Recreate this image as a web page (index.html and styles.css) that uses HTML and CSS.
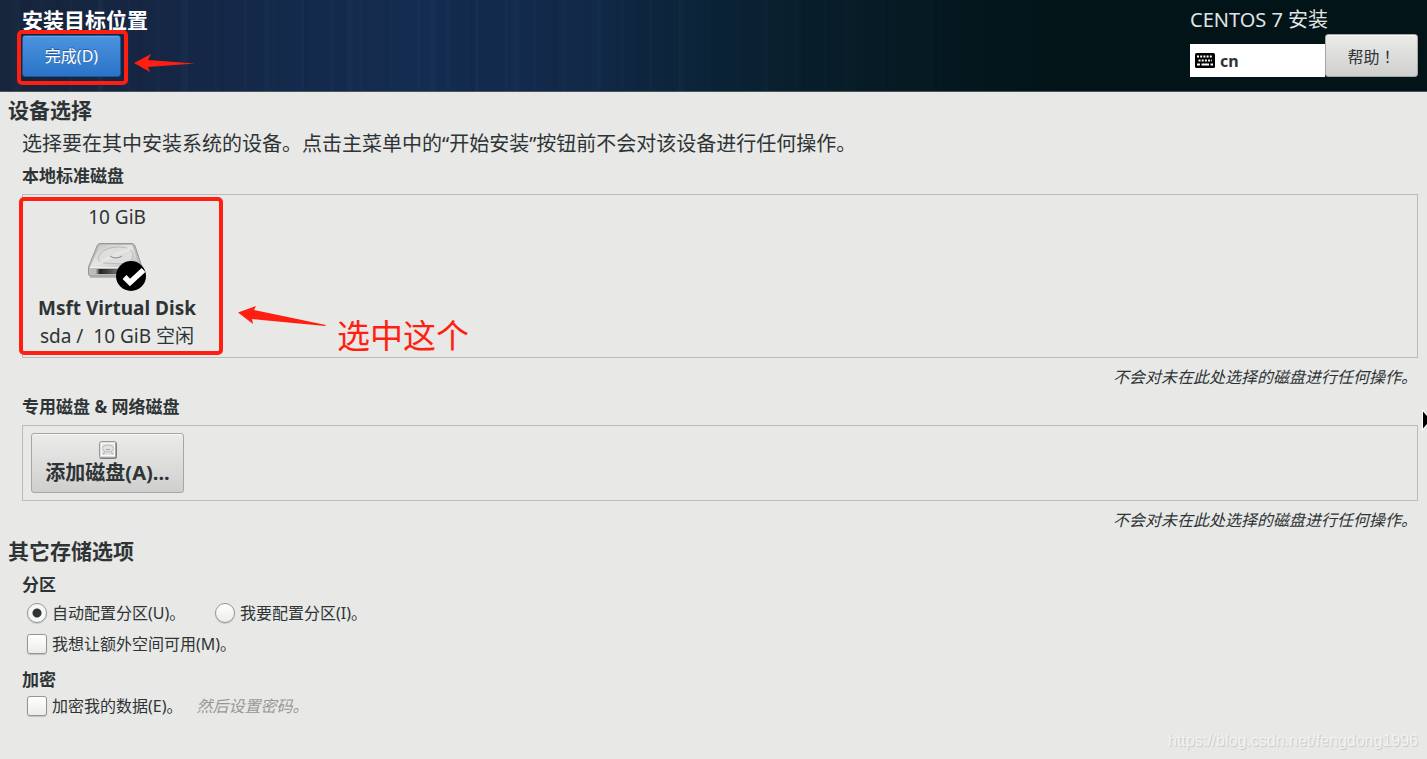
FILE: index.html
```html
<!DOCTYPE html>
<html lang="zh-CN">
<head>
<meta charset="utf-8">
<title>安装目标位置</title>
<link rel="stylesheet" href="styles.css">
</head>
<body>
<header class="topbar">
  <div class="topbar-left">
    <h1 class="title">安装目标位置</h1>
    <div class="done-wrap">
      <button class="btn btn-primary" type="button">完成(D)</button>
      <span class="mark mark-done"></span>
      <svg class="arrow arrow-done" width="62" height="20" viewBox="0 0 62 20" aria-hidden="true"><path d="M0 10 17 1 14 7 61 10.500 14 14 16 19Z" fill="#ff1f12"/></svg>
    </div>
  </div>
  <div class="topbar-right">
    <div class="product">CENTOS 7 安装</div>
    <div class="tools">
      <div class="keyboard">
        <svg width="20" height="15" viewBox="0 0 20 15" aria-hidden="true"><rect width="20" height="15" rx="1.500" fill="#000"/><path d="M2 3.500H18M3.500 7.500H17" stroke="#fff" stroke-width="2" stroke-dasharray="2 1.200"/><path d="M2 11.500H5M6.500 11.500H14M15.500 11.500H18" stroke="#fff" stroke-width="2"/></svg>
        <span>cn</span>
      </div>
      <button class="btn btn-help" type="button" lang="zh-TW">帮助！</button>
    </div>
  </div>
</header>
<main class="content">
  <h2 class="heading">设备选择</h2>
  <section class="section">
    <p class="intro">选择要在其中安装系统的设备。点击主菜单中的“开始安装”按钮前不会对该设备进行任何操作。</p>
    <h3 class="subheading">本地标准磁盘</h3>
    <div class="panel panel-disks">
      <div class="disk">
        <span>10 GiB</span>
        <svg class="disk-icon" width="60" height="52" viewBox="0 0 60 52" aria-hidden="true">
          <defs>
            <linearGradient id="top" x1="0" y1="0" x2="1" y2="1"><stop offset="0" stop-color="#c4c4c2"/><stop offset=".5" stop-color="#e6e6e4"/><stop offset="1" stop-color="#b8b8b6"/></linearGradient>
            <linearGradient id="front" x1="0" y1="0" x2="1" y2="0"><stop offset="0" stop-color="#b5b5b3"/><stop offset=".1" stop-color="#222"/><stop offset=".6" stop-color="#777"/><stop offset="1" stop-color="#aaa"/></linearGradient>
          </defs>
          <path d="M3 37H52V39H3Z" fill="#bcbcba"/>
          <path d="M13 4.500H45Q47 4.500 48 7L55 28V35Q55 37 53 37H4Q1.500 37 1.500 35V28L10 7Q11 4.500 13 4.500Z" fill="#bcbcba" stroke="#979795"/>
          <path d="M13 6H45L53 28H3Z" fill="url(#top)"/>
          <path d="M17 24Q8 22 13 15Q19 8 32 8Q46 8 46 16Q46 22 38 25Z" fill="#dededc" stroke="#bababa"/>
          <path d="M14 23Q28 15 43 10" fill="none" stroke="#e6e6e5" stroke-width="3"/>
          <path d="M23 17Q29 21 35 17" fill="none" stroke="#8a8a88"/>
          <path d="M3 28.500H53" stroke="#f1f1f0"/><rect x="9" y="30" width="39" height="5" fill="url(#front)"/>
          <circle cx="44" cy="37" r="15" fill="#000"/>
          <path d="M37.500 38 43 43.500 56.500 31" fill="none" stroke="#fff" stroke-width="5.500"/>
        </svg>
        <strong>Msft Virtual Disk</strong>
        <span>sda&nbsp;/&nbsp; 10 GiB 空闲</span>
      </div>
      <span class="mark mark-disk"></span>
      <svg class="arrow arrow-disk" width="90" height="22" viewBox="0 0 90 22" aria-hidden="true"><path d="M0 7.500 18 1 16 5 88 20 87 21 14 14 15 19Z" fill="#ff1f12"/></svg>
      <span class="callout">选中这个</span>
    </div>
    <p class="note">不会对未在此处选择的磁盘进行任何操作。</p>
    <h3 class="subheading">专用磁盘 &amp; 网络磁盘</h3>
    <div class="panel panel-add">
      <button class="btn btn-add" type="button">
        <svg width="18" height="18" viewBox="0 0 18 18" aria-hidden="true"><rect x=".5" y=".5" width="17" height="17" rx="2" fill="#ddd" stroke="#999"/><path d="M1 17H17V2" fill="none" stroke="#666"/><rect x="2.500" y="2.500" width="13" height="12" fill="#e2e2e1" stroke="#f8f8f8"/><ellipse cx="9" cy="7.500" rx="5.500" ry="3.500" fill="none" stroke="#bbb"/><path d="M7 8.500H11M4 13 6 11.500M14 13 12 11.500" stroke="#a5a5a5"/></svg>
        <span>添加磁盘(A)...</span>
      </button>
    </div>
    <p class="note">不会对未在此处选择的磁盘进行任何操作。</p>
  </section>
  <h2 class="heading">其它存储选项</h2>
  <section class="section">
    <h3 class="subheading">分区</h3>
    <div class="options">
      <div class="option-row">
        <label class="option option-auto"><input type="radio" name="partition" checked>自动配置分区(U)。</label>
        <label class="option"><input type="radio" name="partition">我要配置分区(I)。</label>
      </div>
      <label class="option"><input type="checkbox">我想让额外空间可用(M)。</label>
    </div>
    <h3 class="subheading">加密</h3>
    <div class="option-row option-encrypt">
      <label class="option"><input type="checkbox">加密我的数据(E)。</label>
      <em class="hint">然后设置密码。</em>
    </div>
  </section>
</main>
<svg class="cursor" width="5" height="22" viewBox="0 0 5 22" aria-hidden="true"><path d="M0 0 5 5V17L0 22Z" fill="#fff"/><path d="M1 2.500 5 7V15L1 19.500Z" fill="#000"/></svg>
<div class="watermark">https://blog.csdn.net/fengdong1996</div>
</body>
</html>
```
FILE: styles.css
```css
* { box-sizing: border-box; }
body {
  margin: 0;
  min-height: 100vh;
  position: relative;
  background: #e8e8e6;
  color: #2e3436;
  font: 16px/20px "Noto Sans", "Noto Sans CJK SC", sans-serif;
}
h1, h2, h3, p { margin: 0; }
button, input { font: inherit; }

.topbar {
  display: flex;
  justify-content: space-between;
  padding: 6px 9px 14px 22px;
  border-bottom: 1px solid #46545c;
  background:
    linear-gradient(90deg, transparent 40%, #021418 78%),
    repeating-linear-gradient(90deg, transparent 0 13px, rgba(70, 130, 180, .05) 17px 19px, transparent 22px 53px, rgba(0, 0, 20, .06) 57px, transparent 61px 83px),
    repeating-linear-gradient(90deg, transparent 0 11px, rgba(70, 130, 180, .05) 13px, transparent 15px 29px),
    linear-gradient(90deg, #17243a 0, #152747 14%, #142c50 28%, #12294a 40%, #0e2840 52%, #0a2230 66%, #021418 78%, #021418 100%);
}
.title { font-size: 21px; line-height: 28px; color: #fff; }
.product { font-size: 20px; line-height: 28px; color: #e0e4e4; }
.done-wrap { position: relative; width: 99px; margin-top: 1px; }
.btn {
  border: 1px solid #a5a7a4;
  border-radius: 3px;
  background: linear-gradient(#ebebea, #cfcfcd);
  color: #2e3436;
  box-shadow: inset 0 1px #f7f7f6;
}
.btn-primary {
  display: block;
  width: 100%;
  height: 42px;
  padding: 0;
  border-color: #1e5799;
  background: linear-gradient(#4c94df, #2a73c7);
  color: #fff;
  box-shadow: inset 0 1px #69a5e4;
  text-shadow: 0 -1px #285c96;
}
.tools { display: flex; align-items: flex-end; }
.keyboard {
  display: flex;
  align-items: center;
  gap: 5px;
  width: 135px;
  height: 33px;
  padding: 0 5px;
  background: #fff;
  font-weight: bold;
}
.btn-help {
  width: 93px;
  height: 43px;
  padding: 0;
  font-family: "Noto Sans CJK TC", "Noto Sans CJK SC", sans-serif;
}

.mark { position: absolute; border: 4px solid #ff1f12; border-radius: 5px; }
.mark-done { inset: -5px -7px -8px -5px; }
.arrow { position: absolute; }
.arrow-done { left: 112px; top: 18px; }

.content { padding: 3px 9px 0 8px; }
.heading { font-size: 21px; line-height: 30px; }
.section { padding-left: 14px; }
.intro { padding: 5px 0 8px; font-size: 20px; line-height: 28px; }
.subheading { font-size: 17px; line-height: 20px; }
.panel { position: relative; margin: 8px 0 9px; border: 1px solid #bbbcb9; }
.panel-disks { padding: 8px 15px 7px; }
.panel-add { padding: 7px 8px; }
.disk {
  display: inline-flex;
  flex-direction: column;
  align-items: center;
  font-size: 19px;
  line-height: 28px;
  vertical-align: top;
}
.disk span, .disk strong { white-space: nowrap; }
.disk-icon { margin: 8px 0 3px; }
.mark-disk { left: -4px; top: 2px; width: 204px; height: 158px; }
.arrow-disk { left: 215px; top: 110px; }
.callout {
  position: absolute;
  left: 314px;
  top: 121px;
  color: #ff1f12;
  font-size: 33px;
  line-height: 40px;
}
.note { margin-bottom: 10px; padding-right: 1px; text-align: right; font-style: italic; }
.btn-add {
  display: flex;
  flex-direction: column;
  align-items: center;
  width: 153px;
  height: 60px;
  padding: 7px 0 0;
  font-size: 20px;
  font-weight: bold;
  line-height: 28px;
}
.section + .heading { margin-top: -5px; line-height: 32px; }
.section + .heading + .section { padding-top: 8px; }

.options { display: grid; gap: 9px; padding: 7px 0 15px 5px; }
.option-row { display: flex; align-items: center; }
.option { display: flex; align-items: center; gap: 5px; line-height: 22px; }
.option-auto { width: 188px; }
.option-encrypt { gap: 14px; padding: 5px 0 0 5px; }
.option input {
  appearance: none;
  width: 20px;
  height: 20px;
  margin: 0;
  border: 1px solid #959692;
  border-radius: 3px;
  background: linear-gradient(#fff, #ececea);
  box-shadow: 0 1px 1px #c2c2bf;
}
.option input[type="radio"] { border-radius: 50%; }
.option input[type="radio"]:checked {
  background: radial-gradient(circle, #2e3436 0 4px, #f7f7f6 5px);
}
.hint { color: #969895; }

.cursor { position: absolute; right: 0; top: 409px; }
.watermark {
  position: absolute;
  right: 9px;
  bottom: 8px;
  font: 16px/20px "Liberation Sans", Arial, sans-serif;
  color: #f3f3f2;
  text-shadow: 1px 1px 1px #c6c6c4;
}
```
